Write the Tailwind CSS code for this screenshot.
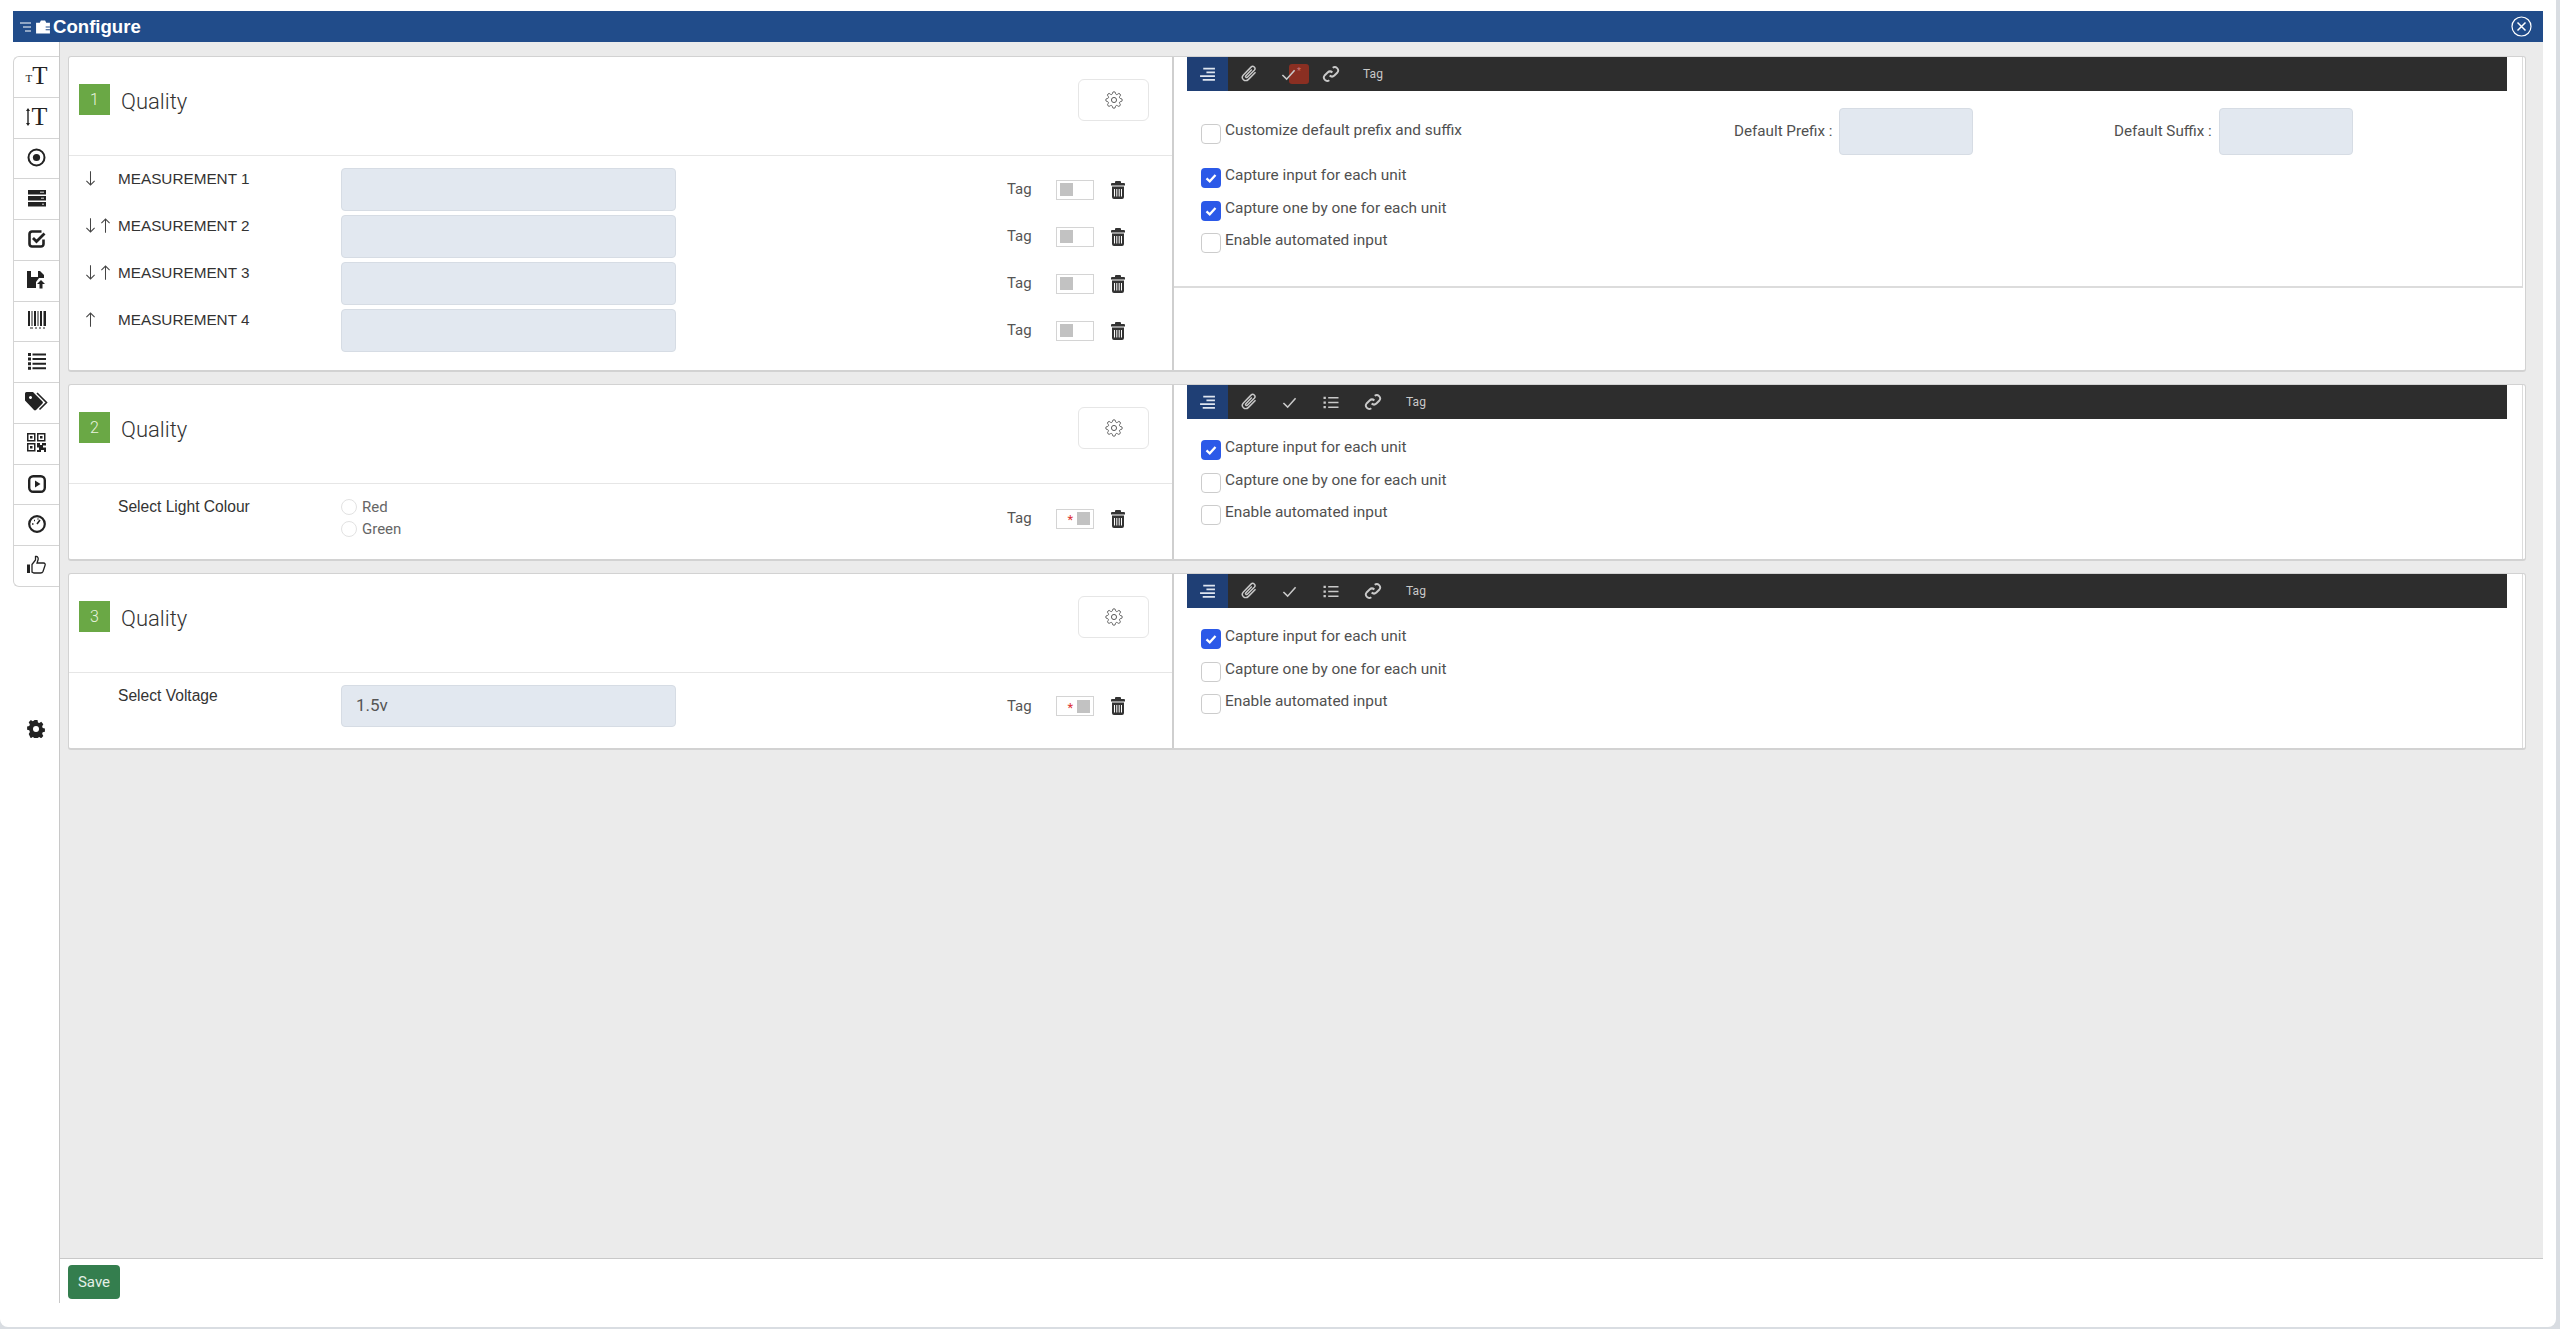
<!doctype html>
<html><head><meta charset="utf-8"><script src="https://cdn.jsdelivr.net/npm/@tailwindcss/browser@4"></script></head>
<body class="bg-[#d9dde2] w-[2560px] h-[1329px] overflow-hidden font-['Roboto',sans-serif] text-[#444] antialiased">
<svg class="absolute w-0 h-0">
<symbol id="align" viewBox="0 0 16 16"><path d="M4 2.500h11M7 6h8M1 9.500h14M3.500 13h11.500" stroke="currentColor" stroke-width="1.600" fill="none"/></symbol>
<symbol id="clip" viewBox="0 0 16 16"><path d="M13.800 6.500 7.300 13a3 3 0 0 1-4.300-4.200l6.800-6.900a2 2 0 0 1 2.900 2.800L6.500 10.800a.9.900 0 0 1-1.300-1.300l5.300-5.400" stroke="currentColor" stroke-width="1.300" fill="none"/></symbol>
<symbol id="check" viewBox="0 0 16 16"><path d="M1.500 8.500 6 13l8.500-9.500" stroke="currentColor" stroke-width="1.700" fill="none"/></symbol>
<symbol id="tick" viewBox="0 0 16 16"><path d="M2 8.500 6.300 12.500 14 4" stroke="currentColor" stroke-width="3" fill="none"/></symbol>
<symbol id="list" viewBox="0 0 16 16"><path d="M5 3h11M5 8h11M5 13h11" stroke="currentColor" stroke-width="1.500"/><path d="M0 1.800h2.500v2.400H0zM0 6.800h2.500v2.400H0zM0 11.800h2.500v2.400H0z" fill="currentColor"/></symbol>
<symbol id="link" viewBox="0 0 16 16"><path d="M9.500 2.500a3 3 0 0 1 4.200 4.200L11 9.300a3 3 0 0 1-4.200 0M6.500 13.500a3 3 0 0 1-4.200-4.200L5 6.700a3 3 0 0 1 4.200 0" stroke="currentColor" stroke-width="1.700" fill="none"/></symbol>
<symbol id="gear" viewBox="0 0 24 24"><circle cx="12" cy="12" r="3.400" fill="none" stroke="currentColor" stroke-width="1.300"/><path d="M19.400 15a1.700 1.700 0 0 0 .3 1.800l.1.100a2 2 0 1 1-2.900 2.900l-.1-.1a1.700 1.700 0 0 0-2.900 1.200V21a2 2 0 1 1-4 0v-.1a1.700 1.700 0 0 0-2.900-1.200l-.1.100a2 2 0 1 1-2.800-2.900l.1-.1a1.700 1.700 0 0 0-1.200-2.800H3a2 2 0 1 1 0-4h.1a1.700 1.700 0 0 0 1.200-2.900l-.1-.1A2 2 0 1 1 7 4.200l.1.100a1.700 1.700 0 0 0 1.900.3h.1A1.700 1.700 0 0 0 10 3V3a2 2 0 1 1 4 0v.1a1.700 1.700 0 0 0 2.900 1.200l.1-.1a2 2 0 1 1 2.800 2.800l-.1.100a1.700 1.700 0 0 0-.3 1.900v.1a1.700 1.700 0 0 0 1.600 1H21a2 2 0 1 1 0 4h-.1a1.700 1.700 0 0 0-1.500 1z" fill="none" stroke="currentColor" stroke-width="1.200"/></symbol>
<symbol id="trash" viewBox="0 0 14 18"><path d="M5 0h4a1 1 0 0 1 1 1v1h3a1 1 0 0 1 1 1v1.500H0V3a1 1 0 0 1 1-1h3V1a1 1 0 0 1 1-1zM1 5.500h12V16a2 2 0 0 1-2 2H3a2 2 0 0 1-2-2z" fill="#333"/><path d="M3.500 8v7.500M5.800 8v7.500M8.200 8v7.500M10.500 8v7.500" stroke="#fff" stroke-width="1"/></symbol>
<symbol id="down" viewBox="0 0 12 18"><path d="M6 1v15M1.500 11.500 6 16l4.500-4.500" stroke="#444" stroke-width="1.100" fill="none"/></symbol>
<symbol id="up" viewBox="0 0 12 18"><path d="M6 17V2M1.500 6.500 6 2l4.500 4.500" stroke="#444" stroke-width="1.100" fill="none"/></symbol>
</svg>

<div class="w-[2556px] h-[1327px] bg-white rounded-b-lg pt-[11px] px-[13px] flex flex-col">
  <header class="h-[31px] bg-[#214c8a] flex items-center text-white shrink-0">
    <svg class="w-[13px] h-[12px] ml-[7px]" viewBox="0 0 13 12"><path d="M0 2h11M3 6h8M5 10h6" stroke="#fff" stroke-width="1.200"/></svg>
    <svg class="w-[16px] h-[16px] ml-[2px]" viewBox="0 0 15 14"><path d="M1 3h3.500l1-2h4l1 2H14v10H1z" fill="#fff"/><path d="M10 7h4M10 9.500h4" stroke="#214c8a"/></svg>
    <span class="ml-[2px] text-[18.600px] font-bold font-['Liberation_Sans',sans-serif]">Configure</span>
    <svg class="w-[21px] h-[21px] ml-auto mr-[11px]" viewBox="0 0 21 21"><circle cx="10.500" cy="10.500" r="9.500" fill="none" stroke="#fff" stroke-width="1.200"/><path d="M6.500 6.500l8 8M14.500 6.500l-8 8" stroke="#fff" stroke-width="1.500"/></svg>
  </header>

  <div class="flex flex-1 min-h-0">
    <aside class="w-[47px] shrink-0 border-r border-[#c8c8c8] h-[1261px] pt-[14px] flex flex-col text-[#222]">
      <div class="border border-r-0 border-[#d4d4d4] rounded-l-md flex flex-col divide-y divide-[#d4d4d4] h-[531px] font-['Liberation_Serif',serif]">
        <div class="flex-1 pb-[2px] flex items-center justify-center leading-none"><span class="text-[11px] pt-[5px]">T</span><span class="text-[25px]">T</span></div>
        <div class="flex-1 pb-[2px] flex items-center justify-center leading-none"><svg class="w-[4px] h-[18px] mr-[2px]" viewBox="0 0 4 18"><path d="M2 2v14" stroke="#222" stroke-width="1.400"/><path d="M0 3l2-3 2 3zM0 15l2 3 2-3z" fill="#222"/></svg><span class="text-[26px]">T</span></div>
        <div class="flex-1 pb-[2px] flex items-center justify-center"><svg class="w-[19px] h-[19px]" viewBox="0 0 19 19"><circle cx="9.500" cy="9.500" r="8" fill="none" stroke="#222" stroke-width="2"/><circle cx="9.500" cy="9.500" r="3.600" fill="#222"/></svg></div>
        <div class="flex-1 pb-[2px] flex items-center justify-center"><svg class="w-[18px] h-[17px]" viewBox="0 0 18 17"><path d="M0 0h18v4.500H0zM0 6h18v4.500H0zM0 12h18v4.500H0z" fill="#222"/><path d="M12 2.200h4M13 8.200h3M14 14.200h2" stroke="#ddd"/></svg></div>
        <div class="flex-1 pb-[2px] flex items-center justify-center"><svg class="w-[18px] h-[18px]" viewBox="0 0 18 18"><path d="M15.500 9.500V14a2.500 2.500 0 0 1-2.500 2.500H4A2.500 2.500 0 0 1 1.500 14V4A2.500 2.500 0 0 1 4 1.500h9.500" fill="none" stroke="#222" stroke-width="2.600"/><path d="M5 8l3.500 3.500L16.500 3.500" fill="none" stroke="#222" stroke-width="2.800"/></svg></div>
        <div class="flex-1 pb-[2px] flex items-center justify-center"><svg class="w-[19px] h-[19px]" viewBox="0 0 19 19"><path d="M0 1h4v6h7V1h2l4 4v3h-5l-3 4v6H0z" fill="#222"/><path d="M14 10l4 4h-2.500v4.500h-3V14H10z" fill="#222"/></svg></div>
        <div class="flex-1 pb-[2px] flex items-center justify-center"><svg class="w-[18px] h-[18px]" viewBox="0 0 18 18"><path d="M0 0h2v15H0zM3.500 0h1v15h-1zM6 0h2v15H6zM9.500 0h1v15h-1zM12 0h2v15h-2zM15.500 0H18v15h-2.500zM2 16.500h3v1H2zM7 16.500h2v1H7zM11 16.500h2v1h-2zM15 16.500h2v1h-2z" fill="#222"/></svg></div>
        <div class="flex-1 pb-[2px] flex items-center justify-center"><svg class="w-[18px] h-[17px]" viewBox="0 0 18 17"><path d="M0 0h3v3H0zM0 4.600h3v3H0zM0 9.200h3v3H0zM0 13.800h3v3H0zM4.500 .5H18v2H4.500zM4.500 5.100H18v2H4.500zM4.500 9.700H18v2H4.500zM4.500 14.300H18v2H4.500z" fill="#222"/></svg></div>
        <div class="flex-1 pb-[2px] flex items-center justify-center"><svg class="w-[23px] h-[20px]" viewBox="0 0 23 20"><path d="M0 1.500A1.500 1.500 0 0 1 1.500 0H8l9.500 9.500a1.500 1.500 0 0 1 0 2l-6.500 6.500a1.500 1.500 0 0 1-2 0L0 8.500zM4 5.500a1.500 1.500 0 1 0 0-.1z" fill="#222" fill-rule="evenodd"/><path d="M12 1l9.500 9.500-7 7" fill="none" stroke="#222" stroke-width="1.600"/></svg></div>
        <div class="flex-1 pb-[2px] flex items-center justify-center"><svg class="w-[19px] h-[19px]" viewBox="0 0 19 19"><path d="M.75.750h7v7h-7zM10.750.750h7v7h-7zM.75 10.750h7v7h-7z" fill="none" stroke="#222" stroke-width="1.500"/><path d="M3 3h2.500v2.500H3zM13 3h2.500v2.500H13zM3 13h2.500v2.500H3zM10 10h3v2h2v-2h4v2.500h-3v2h3V19h-2v-2h-3v2h-4v-2h2v-2.500h-2z" fill="#222"/></svg></div>
        <div class="flex-1 pb-[2px] flex items-center justify-center"><svg class="w-[18px] h-[18px]" viewBox="0 0 18 18"><rect x="1.200" y="1.200" width="15.600" height="15.600" rx="4" fill="none" stroke="#222" stroke-width="2.400"/><path d="M7 5.500l5.500 3.500L7 12.500z" fill="#222"/></svg></div>
        <div class="flex-1 pb-[2px] flex items-center justify-center"><svg class="w-[18px] h-[18px]" viewBox="0 0 18 18"><circle cx="9" cy="9" r="7.800" fill="none" stroke="#222" stroke-width="2.200"/><path d="M9 9l3-4" stroke="#222" stroke-width="1.600"/><path d="M4 9h1.500M6 5.500h1M9.500 4h1" stroke="#222" stroke-width="1.500"/></svg></div>
        <div class="flex-1 pb-[2px] flex items-center justify-center"><svg class="w-[19px] h-[20px]" viewBox="0 0 19 20"><path d="M0 9.500h3V18H0z" fill="#222"/><path d="M5 9.500l3.500-4.500V1.500c2.500-.5 3 2 2.500 3.500L10 8h6.500c1.500 0 2 1.200 1.500 2.500l-2 6c-.5 1.200-1 1.500-2.500 1.500H7l-2-1z" fill="none" stroke="#222" stroke-width="1.300"/></svg></div>
      </div>
      <div class="flex justify-center mt-[133px]"><svg class="w-[18px] h-[18px]" viewBox="0 0 18 18"><path d="M7.300 0h3.400l.5 2.400 1.500.7 2.200-1.300 2.300 2.400-1.300 2.100.6 1.600 2.500.5v3.300l-2.500.6-.6 1.500 1.300 2.200-2.400 2.300-2.100-1.300-1.600.7-.5 2.400H7.300l-.5-2.400-1.500-.7-2.200 1.300L.8 14l1.300-2.100-.7-1.600L-1 9.800V6.500l2.400-.6.700-1.500L.8 2.200 3.200 0l2.100 1.300 1.500-.7z" fill="#222" transform="translate(1 0) scale(.89 1)"/><circle cx="9" cy="9" r="3" fill="#fff"/></svg></div>
    </aside>

    <div class="flex-1 min-w-0 flex flex-col">
      <main class="bg-[#ebebeb] h-[1217px] border-b border-[#c8c8c8] pl-[8px] pr-[17px] pt-[14px]">
        <!-- card 1 -->
        <section class="h-[316px] bg-white border border-b-2 border-[#d2d2d2] rounded-[3px] flex mb-[12px]">
          <div class="w-[1105px] shrink-0 border-r-2 border-[#cfcfcf]">
            <div class="h-[99px] border-b border-[#e6e6e6] flex items-start pl-[10px]">
              <div class="mt-[27px] w-[31px] h-[31px] bg-[#6aa845] text-[#e8f3df] text-[16px] font-light flex items-center justify-center">1</div>
              <h2 class="mt-[30px] ml-[11px] text-[22px] leading-[30px] font-light text-[#333]">Quality</h2>
              <button class="ml-auto mr-[23px] mt-[22px] w-[71px] h-[42px] border border-[#e6e6e6] rounded-md flex items-center justify-center text-[#555]"><svg class="w-[18px] h-[18px]"><use href="#gear"/></svg></button>
            </div>
            <div class="pt-[10px]">
              <div class="flex items-center h-[47px]">
                <div class="w-[49px] pl-[16px] flex self-start pt-[4px]"><svg class="w-[11px] h-[17px]"><use href="#down"/></svg></div>
                <label class="w-[223px] self-start pt-[3px] text-[15.300px] leading-[20px] font-['Liberation_Sans',sans-serif] text-[#333]">MEASUREMENT 1</label>
                <div class="w-[335px] h-[43px] bg-[#e2e8f0] border border-[#d6dce4] rounded-[4px]"></div>
                <span class="ml-[331px] w-[49px] text-[15px] text-[#555]">Tag</span>
                <div class="w-[38px] h-[20px] border border-[#d4d4d4] flex items-center pl-[3px]"><span class="w-[13px] h-[13px] bg-[#c2c2c2]"></span></div>
                <svg class="w-[14px] h-[18px] ml-[17px]"><use href="#trash"/></svg>
              </div>
              <div class="flex items-center h-[47px]">
                <div class="w-[49px] pl-[16px] flex self-start pt-[4px] gap-[4px]"><svg class="w-[11px] h-[17px]"><use href="#down"/></svg><svg class="w-[11px] h-[17px]"><use href="#up"/></svg></div>
                <label class="w-[223px] self-start pt-[3px] text-[15.300px] leading-[20px] font-['Liberation_Sans',sans-serif] text-[#333]">MEASUREMENT 2</label>
                <div class="w-[335px] h-[43px] bg-[#e2e8f0] border border-[#d6dce4] rounded-[4px]"></div>
                <span class="ml-[331px] w-[49px] text-[15px] text-[#555]">Tag</span>
                <div class="w-[38px] h-[20px] border border-[#d4d4d4] flex items-center pl-[3px]"><span class="w-[13px] h-[13px] bg-[#c2c2c2]"></span></div>
                <svg class="w-[14px] h-[18px] ml-[17px]"><use href="#trash"/></svg>
              </div>
              <div class="flex items-center h-[47px]">
                <div class="w-[49px] pl-[16px] flex self-start pt-[4px] gap-[4px]"><svg class="w-[11px] h-[17px]"><use href="#down"/></svg><svg class="w-[11px] h-[17px]"><use href="#up"/></svg></div>
                <label class="w-[223px] self-start pt-[3px] text-[15.300px] leading-[20px] font-['Liberation_Sans',sans-serif] text-[#333]">MEASUREMENT 3</label>
                <div class="w-[335px] h-[43px] bg-[#e2e8f0] border border-[#d6dce4] rounded-[4px]"></div>
                <span class="ml-[331px] w-[49px] text-[15px] text-[#555]">Tag</span>
                <div class="w-[38px] h-[20px] border border-[#d4d4d4] flex items-center pl-[3px]"><span class="w-[13px] h-[13px] bg-[#c2c2c2]"></span></div>
                <svg class="w-[14px] h-[18px] ml-[17px]"><use href="#trash"/></svg>
              </div>
              <div class="flex items-center h-[47px]">
                <div class="w-[49px] pl-[16px] flex self-start pt-[4px]"><svg class="w-[11px] h-[17px]"><use href="#up"/></svg></div>
                <label class="w-[223px] self-start pt-[3px] text-[15.300px] leading-[20px] font-['Liberation_Sans',sans-serif] text-[#333]">MEASUREMENT 4</label>
                <div class="w-[335px] h-[43px] bg-[#e2e8f0] border border-[#d6dce4] rounded-[4px]"></div>
                <span class="ml-[331px] w-[49px] text-[15px] text-[#555]">Tag</span>
                <div class="w-[38px] h-[20px] border border-[#d4d4d4] flex items-center pl-[3px]"><span class="w-[13px] h-[13px] bg-[#c2c2c2]"></span></div>
                <svg class="w-[14px] h-[18px] ml-[17px]"><use href="#trash"/></svg>
              </div>
            </div>
          </div>
          <div class="flex-1 min-w-0 pr-[2px]">
            <div class="h-[231px] border-b-2 border-r border-[#dcdcdc]">
              <div class="ml-[13px] mr-[15px] h-[34px] bg-[#2d2d2d] flex items-center text-[#c9c9c9]">
                <div class="w-[41px] h-full bg-[#1f3f75] flex items-center justify-center text-[#dfe6f0]"><svg class="w-[17px] h-[17px]"><use href="#align"/></svg></div>
                <div class="w-[41px] flex justify-center"><svg class="w-[18px] h-[18px]"><use href="#clip"/></svg></div>
                <div class="relative w-[41px] h-full flex items-center justify-center"><span class="absolute left-[20px] top-[7px] w-[20px] h-[20px] rounded-[3px] bg-[#8a2f22] text-[#c77] text-[9px] leading-[14px] text-center">*</span><svg class="relative w-[15px] h-[15px] -ml-[2px]"><use href="#check"/></svg></div>
                <div class="w-[41px] flex justify-center"><svg class="w-[18px] h-[18px]"><use href="#link"/></svg></div>
                <div class="w-[44px] text-center text-[12px]">Tag</div>
              </div>
              <div class="mt-[17px] flex h-[47px] pl-[27px] text-[15.400px] text-[#505050]">
                <span class="mt-[16px] w-[20px] h-[20px] border border-[#ccc] rounded-[4px] shrink-0"></span>
                <span class="mt-[12px] ml-[4px] w-[509px] leading-[20px]">Customize default prefix and suffix</span>
                <span class="mt-[13px] w-[105px] leading-[20px] text-[15.200px]">Default Prefix :</span>
                <span class="w-[134px] h-[47px] bg-[#e2e8f0] border border-[#d6dce4] rounded-[4px]"></span>
                <span class="mt-[13px] ml-[141px] w-[105px] leading-[20px] text-[15.200px]">Default Suffix :</span>
                <span class="w-[134px] h-[47px] bg-[#e2e8f0] border border-[#d6dce4] rounded-[4px]"></span>
              </div>
              <div class="mt-[13px] pl-[27px] text-[15.400px] text-[#505050]">
                <div class="flex h-[32.500px]"><span class="w-[20px] h-[20px] bg-[#2b59e8] rounded-[4px] flex items-center justify-center text-white"><svg class="w-[12px] h-[12px]"><use href="#tick"/></svg></span><span class="ml-[4px] -mt-[3px] leading-[20px]">Capture input for each unit</span></div>
                <div class="flex h-[32.500px]"><span class="w-[20px] h-[20px] bg-[#2b59e8] rounded-[4px] flex items-center justify-center text-white"><svg class="w-[12px] h-[12px]"><use href="#tick"/></svg></span><span class="ml-[4px] -mt-[3px] leading-[20px]">Capture one by one for each unit</span></div>
                <div class="flex h-[32.500px]"><span class="w-[20px] h-[20px] border border-[#ccc] rounded-[4px]"></span><span class="ml-[4px] -mt-[3px] leading-[20px]">Enable automated input</span></div>
              </div>
            </div>
          </div>
        </section>
        <!-- card 2 -->
        <section class="h-[177px] bg-white border border-b-2 border-[#d2d2d2] rounded-[3px] flex mb-[12px]">
          <div class="w-[1105px] shrink-0 border-r-2 border-[#cfcfcf]">
            <div class="h-[99px] border-b border-[#e6e6e6] flex items-start pl-[10px]">
              <div class="mt-[27px] w-[31px] h-[31px] bg-[#6aa845] text-[#e8f3df] text-[16px] font-light flex items-center justify-center">2</div>
              <h2 class="mt-[30px] ml-[11px] text-[22px] leading-[30px] font-light text-[#333]">Quality</h2>
              <button class="ml-auto mr-[23px] mt-[22px] w-[71px] h-[42px] border border-[#e6e6e6] rounded-md flex items-center justify-center text-[#555]"><svg class="w-[18px] h-[18px]"><use href="#gear"/></svg></button>
            </div>
            <div class="flex items-center h-[69px]">
              <div class="w-[49px]"></div>
              <label class="w-[223px] self-start pt-[13px] text-[15.600px] leading-[20px] font-['Liberation_Sans',sans-serif] text-[#333]">Select Light Colour</label>
              <div class="w-[335px] self-start pt-[12px] text-[15px] text-[#666]">
                <div class="flex items-center h-[22px]"><span class="w-[16px] h-[16px] rounded-full border border-[#e2e2e2]"></span><span class="ml-[5px]">Red</span></div>
                <div class="flex items-center h-[22px]"><span class="w-[16px] h-[16px] rounded-full border border-[#e2e2e2]"></span><span class="ml-[5px]">Green</span></div>
              </div>
              <span class="ml-[331px] w-[49px] text-[15px] text-[#555]">Tag</span>
              <div class="w-[38px] h-[20px] border border-[#d4d4d4] flex items-center justify-end pr-[3px]"><span class="text-[#d33] text-[13px] leading-none mr-[4px] mt-[2px]">*</span><span class="w-[13px] h-[13px] bg-[#c2c2c2]"></span></div>
              <svg class="w-[14px] h-[18px] ml-[17px]"><use href="#trash"/></svg>
            </div>
          </div>
          <div class="flex-1 min-w-0 pr-[2px]">
            <div class="h-full border-r border-[#dcdcdc]">
              <div class="ml-[13px] mr-[15px] h-[34px] bg-[#2d2d2d] flex items-center text-[#c9c9c9]">
                <div class="w-[41px] h-full bg-[#1f3f75] flex items-center justify-center text-[#dfe6f0]"><svg class="w-[17px] h-[17px]"><use href="#align"/></svg></div>
                <div class="w-[41px] flex justify-center"><svg class="w-[18px] h-[18px]"><use href="#clip"/></svg></div>
                <div class="w-[41px] flex justify-center"><svg class="w-[15px] h-[15px]"><use href="#check"/></svg></div>
                <div class="w-[42px] flex justify-center"><svg class="w-[16px] h-[15px]"><use href="#list"/></svg></div>
                <div class="w-[42px] flex justify-center"><svg class="w-[18px] h-[18px]"><use href="#link"/></svg></div>
                <div class="w-[44px] text-center text-[12px]">Tag</div>
              </div>
              <div class="mt-[21px] pl-[27px] text-[15.400px] text-[#505050]">
                <div class="flex h-[32.500px]"><span class="w-[20px] h-[20px] bg-[#2b59e8] rounded-[4px] flex items-center justify-center text-white"><svg class="w-[12px] h-[12px]"><use href="#tick"/></svg></span><span class="ml-[4px] -mt-[3px] leading-[20px]">Capture input for each unit</span></div>
                <div class="flex h-[32.500px]"><span class="w-[20px] h-[20px] border border-[#ccc] rounded-[4px]"></span><span class="ml-[4px] -mt-[3px] leading-[20px]">Capture one by one for each unit</span></div>
                <div class="flex h-[32.500px]"><span class="w-[20px] h-[20px] border border-[#ccc] rounded-[4px]"></span><span class="ml-[4px] -mt-[3px] leading-[20px]">Enable automated input</span></div>
              </div>
            </div>
          </div>
        </section>
        <!-- card 3 -->
        <section class="h-[177px] bg-white border border-b-2 border-[#d2d2d2] rounded-[3px] flex">
          <div class="w-[1105px] shrink-0 border-r-2 border-[#cfcfcf]">
            <div class="h-[99px] border-b border-[#e6e6e6] flex items-start pl-[10px]">
              <div class="mt-[27px] w-[31px] h-[31px] bg-[#6aa845] text-[#e8f3df] text-[16px] font-light flex items-center justify-center">3</div>
              <h2 class="mt-[30px] ml-[11px] text-[22px] leading-[30px] font-light text-[#333]">Quality</h2>
              <button class="ml-auto mr-[23px] mt-[22px] w-[71px] h-[42px] border border-[#e6e6e6] rounded-md flex items-center justify-center text-[#555]"><svg class="w-[18px] h-[18px]"><use href="#gear"/></svg></button>
            </div>
            <div class="flex items-center h-[66px]">
              <div class="w-[49px]"></div>
              <label class="w-[223px] self-start pt-[13px] text-[15.600px] leading-[20px] font-['Liberation_Sans',sans-serif] text-[#333]">Select Voltage</label>
              <div class="w-[335px] h-[42px] bg-[#e2e8f0] border border-[#d6dce4] rounded-[4px] flex items-center pl-[14px] text-[17px] text-[#555]">1.5v</div>
              <span class="ml-[331px] w-[49px] text-[15px] text-[#555]">Tag</span>
              <div class="w-[38px] h-[20px] border border-[#d4d4d4] flex items-center justify-end pr-[3px]"><span class="text-[#d33] text-[13px] leading-none mr-[4px] mt-[2px]">*</span><span class="w-[13px] h-[13px] bg-[#c2c2c2]"></span></div>
              <svg class="w-[14px] h-[18px] ml-[17px]"><use href="#trash"/></svg>
            </div>
          </div>
          <div class="flex-1 min-w-0 pr-[2px]">
            <div class="h-full border-r border-[#dcdcdc]">
              <div class="ml-[13px] mr-[15px] h-[34px] bg-[#2d2d2d] flex items-center text-[#c9c9c9]">
                <div class="w-[41px] h-full bg-[#1f3f75] flex items-center justify-center text-[#dfe6f0]"><svg class="w-[17px] h-[17px]"><use href="#align"/></svg></div>
                <div class="w-[41px] flex justify-center"><svg class="w-[18px] h-[18px]"><use href="#clip"/></svg></div>
                <div class="w-[41px] flex justify-center"><svg class="w-[15px] h-[15px]"><use href="#check"/></svg></div>
                <div class="w-[42px] flex justify-center"><svg class="w-[16px] h-[15px]"><use href="#list"/></svg></div>
                <div class="w-[42px] flex justify-center"><svg class="w-[18px] h-[18px]"><use href="#link"/></svg></div>
                <div class="w-[44px] text-center text-[12px]">Tag</div>
              </div>
              <div class="mt-[21px] pl-[27px] text-[15.400px] text-[#505050]">
                <div class="flex h-[32.500px]"><span class="w-[20px] h-[20px] bg-[#2b59e8] rounded-[4px] flex items-center justify-center text-white"><svg class="w-[12px] h-[12px]"><use href="#tick"/></svg></span><span class="ml-[4px] -mt-[3px] leading-[20px]">Capture input for each unit</span></div>
                <div class="flex h-[32.500px]"><span class="w-[20px] h-[20px] border border-[#ccc] rounded-[4px]"></span><span class="ml-[4px] -mt-[3px] leading-[20px]">Capture one by one for each unit</span></div>
                <div class="flex h-[32.500px]"><span class="w-[20px] h-[20px] border border-[#ccc] rounded-[4px]"></span><span class="ml-[4px] -mt-[3px] leading-[20px]">Enable automated input</span></div>
              </div>
            </div>
          </div>
        </section>
      </main>
      <div class="pl-[8px] pt-[6px]"><button class="w-[52px] h-[34px] bg-[#347e4e] text-[#e4efe7] text-[15px] rounded-[4px]">Save</button></div>
    </div>
  </div>
</div>
</body></html>
